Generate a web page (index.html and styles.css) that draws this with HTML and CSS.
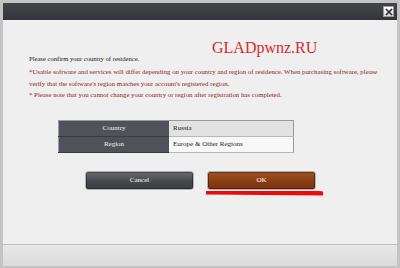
FILE: index.html
```html
<!DOCTYPE html>
<html lang="en">
<head>
  <meta charset="UTF-8" />
  <title>Confirm Country</title>
  <link rel="stylesheet" href="styles.css">
</head>
<body>
  <div class="window">
    <div class="titlebar">
      <button class="close" aria-label="Close">
        <svg width="8" height="8" viewBox="0 0 8 8"><path d="M1 1L7 7M7 1L1 7" stroke="#2a2a2e" stroke-width="1.6"/></svg>
      </button>
    </div>

    <div class="content">
      <div class="watermark">GLADpwnz.RU</div>
      <p class="lead">Please confirm your country of residence.</p>
      <p class="notice">*Usable software and services will differ depending on your country and region of residence. When purchasing software, please verify that the software's region matches your account's registered region.<br>* Please note that you cannot change your country or region after registration has completed.</p>

      <table class="info">
        <tr>
          <th>Country</th>
          <td class="shade">Russia</td>
        </tr>
        <tr>
          <th>Region</th>
          <td>Europe &amp; Other Regions</td>
        </tr>
      </table>

      <div class="actions">
        <button class="btn cancel">Cancel</button>
        <div class="ok-wrap">
          <button class="btn ok">OK</button>
          <div class="mark"></div>
        </div>
      </div>
    </div>

    <div class="footer"></div>
  </div>
</body>
</html>
```

FILE: styles.css
```css
body {
  margin: 0;
  width: 400px;
  height: 268px;
  background-color: #c4c4c4;
  font-family: 'Liberation Serif', serif;
}
.window {
  box-sizing: border-box;
  height: 268px;
  padding: 3px 3px 2px 3px;
  display: flex;
  flex-direction: column;
}
.titlebar {
  height: 17px;
  background: linear-gradient(#44454b, #34353a);
  display: flex;
  align-items: center;
  justify-content: flex-end;
  padding-right: 3px;
}
.close {
  width: 11px;
  height: 11px;
  padding: 0;
  border: 1px solid #9a9a9a;
  background: linear-gradient(#ffffff, #d8d8d8);
  display: flex;
  align-items: center;
  justify-content: center;
}
.content {
  flex: 1;
  background-color: #efefef;
  padding: 0 0 0 26px;
  border-bottom: 1px solid #c2c2c2;
}
.watermark {
  color: #d62a2a;
  font-size: 16px;
  margin: 19px 0 0 183px;
  height: 18px;
  line-height: 18px;
}
.lead {
  margin: -2px 0 0 0;
  font-size: 6.6px;
  color: #151515;
}
.notice {
  width: 352px;
  margin: 4px 0 0 0;
  font-size: 6.8px;
  line-height: 11.5px;
  color: #8a1c1c;
}
.info {
  border-collapse: collapse;
  margin: 19px 0 0 29px;
  width: 236px;
  border: 1px solid #9a9a9a;
  font-size: 7px;
}
.info th {
  width: 110px;
  height: 15px;
  padding: 0;
  background-color: #50525a;
  color: #f0f0f0;
  font-weight: normal;
  border-bottom: 1px solid #3c3d43;
}
.info td {
  padding: 0 0 0 4px;
  background-color: #f8f8f8;
  color: #1e1e1e;
  border-bottom: 1px solid #b8b8b8;
}
.info td.shade {
  background-color: #e2e2e2;
}
.actions {
  display: flex;
  gap: 13px;
  margin: 18px 0 0 56px;
}
.btn {
  width: 109px;
  height: 19px;
  border: 1px solid #b5b5b5;
  border-radius: 3px;
  color: #fff;
  font-family: 'Liberation Serif', serif;
  font-size: 7px;
  font-weight: normal;
  padding: 0;
  box-shadow: inset 0 0 0 1px rgba(0,0,0,0.35);
}
.cancel {
  background: linear-gradient(#6a6c72, #45474d 55%, #3c3e44);
}
.ok {
  background: linear-gradient(#a15326, #8a3d13 55%, #7a3410);
}
.ok-wrap {
  display: flex;
  flex-direction: column;
}
.mark {
  width: 117px;
  height: 5px;
  margin: 1px 0 0 -1px;
  background-color: #ee0a0a;
  clip-path: polygon(0 0, 97% 10%, 100% 20%, 100% 100%, 0 80%);
}
.footer {
  height: 21px;
  background: linear-gradient(#e6e6e6, #dcdcdc);
}
```
